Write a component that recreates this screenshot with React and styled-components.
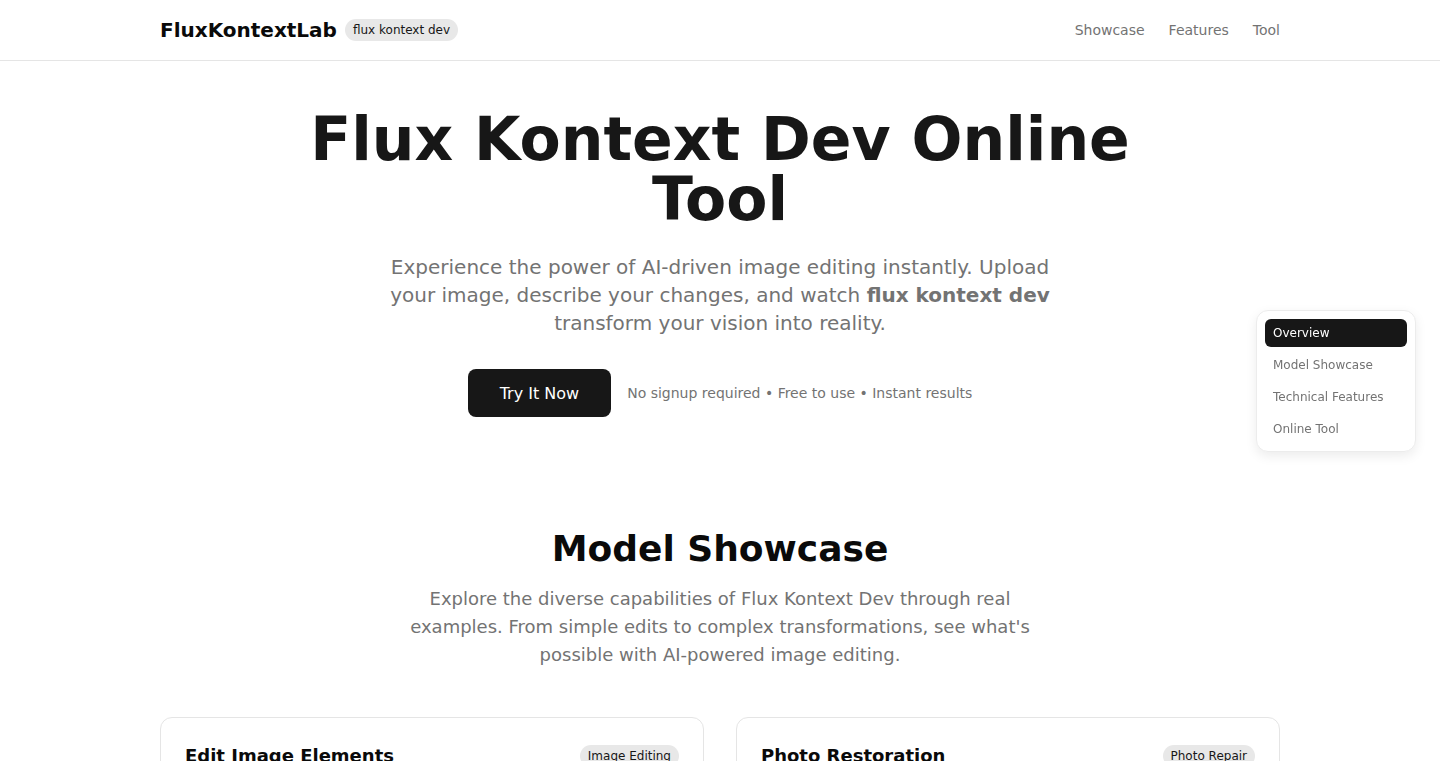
import styled, { createGlobalStyle } from "styled-components";

const GlobalStyle = createGlobalStyle`
  * { box-sizing: border-box; }
  body {
    margin: 0;
    background: #ffffff;
    color: #171717;
    font-family: "DejaVu Sans", sans-serif;
  }
`;

const Header = styled.header`
  height: 61px;
  border-bottom: 1px solid #e5e5e5;
  background: #fff;
`;

const Container = styled.div`
  max-width: 1152px;
  margin: 0 auto;
  padding: 0 16px;
  height: 100%;
`;

const HeaderRow = styled(Container)`
  display: flex;
  align-items: center;
  justify-content: space-between;
`;

const Brand = styled.div`
  display: flex;
  align-items: center;
  gap: 8px;
`;

const Logo = styled.span`
  font-size: 20px;
  font-weight: bold;
  color: #0a0a0a;
`;

const Pill = styled.span`
  font-size: 12px;
  padding: 4px 8px;
  border-radius: 999px;
  background: #e8e8e8;
  color: #171717;
`;

const Nav = styled.nav`
  display: flex;
  gap: 24px;
`;

const NavLink = styled.a`
  font-size: 14px;
  color: #737373;
  text-decoration: none;
`;

const Hero = styled.section`
  padding: 48px 16px 0;
  text-align: center;
`;

const Title = styled.h1`
  margin: 0 auto;
  max-width: 896px;
  font-size: 60px;
  line-height: 60px;
  font-weight: bold;
  color: #171717;
`;

const Lead = styled.p`
  margin: 24px auto 0;
  max-width: 672px;
  font-size: 20px;
  line-height: 28px;
  color: #737373;
  b { font-weight: bold; }
`;

const Actions = styled.div`
  margin-top: 32px;
  display: flex;
  justify-content: center;
  align-items: center;
  gap: 16px;
`;

const Button = styled.button`
  height: 48px;
  padding: 0 32px;
  border: 0;
  border-radius: 8px;
  background: #171717;
  color: #fff;
  font-family: inherit;
  font-size: 16px;
  cursor: pointer;
`;

const Note = styled.span`
  font-size: 14px;
  color: #737373;
`;

const Section = styled.section`
  padding: 112px 16px 0;
  text-align: center;
`;

const H2 = styled.h2`
  margin: 0;
  font-size: 36px;
  line-height: 40px;
  font-weight: bold;
  color: #0a0a0a;
`;

const SubLead = styled.p`
  margin: 16px auto 0;
  max-width: 640px;
  font-size: 18px;
  line-height: 28px;
  color: #737373;
`;

const Grid = styled.div`
  max-width: 1120px;
  margin: 48px auto 0;
  display: grid;
  grid-template-columns: 1fr 1fr;
  gap: 32px;
  text-align: left;
`;

const Card = styled.div`
  border: 1px solid #e5e5e5;
  border-radius: 12px;
  padding: 24px;
  min-height: 200px;
`;

const CardHead = styled.div`
  display: flex;
  justify-content: space-between;
  align-items: center;
  min-height: 28px;
`;

const CardTitle = styled.h3`
  margin: 0;
  font-size: 18px;
  line-height: 28px;
  font-weight: bold;
  color: #0a0a0a;
`;

const Badge = styled.span`
  font-size: 12px;
  padding: 4px 8px;
  border-radius: 999px;
  background: #e8e8e8;
  color: #171717;
`;

const SideNav = styled.aside`
  position: fixed;
  right: 24px;
  top: 310px;
  width: 160px;
  padding: 8px;
  background: #fff;
  border: 1px solid #ececec;
  border-radius: 12px;
  box-shadow: 0 4px 12px rgba(0, 0, 0, 0.08);
  display: flex;
  flex-direction: column;
  gap: 4px;
`;

const SideItem = styled.a`
  display: block;
  height: 28px;
  line-height: 28px;
  padding: 0 8px;
  border-radius: 6px;
  font-size: 12px;
  text-decoration: none;
  color: ${(p) => (p.$active ? "#fff" : "#737373")};
  background: ${(p) => (p.$active ? "#171717" : "transparent")};
`;

export default function App() {
  return (
    <>
      <GlobalStyle />
      <Header>
        <HeaderRow>
          <Brand>
            <Logo>FluxKontextLab</Logo>
            <Pill>flux kontext dev</Pill>
          </Brand>
          <Nav>
            <NavLink href="#showcase">Showcase</NavLink>
            <NavLink href="#features">Features</NavLink>
            <NavLink href="#tool">Tool</NavLink>
          </Nav>
        </HeaderRow>
      </Header>

      <Hero>
        <Title>Flux Kontext Dev Online Tool</Title>
        <Lead>
          Experience the power of AI-driven image editing instantly. Upload
          your image, describe your changes, and watch <b>flux kontext dev</b>{" "}
          transform your vision into reality.
        </Lead>
        <Actions>
          <Button>Try It Now</Button>
          <Note>No signup required • Free to use • Instant results</Note>
        </Actions>
      </Hero>

      <Section id="showcase">
        <H2>Model Showcase</H2>
        <SubLead>
          Explore the diverse capabilities of Flux Kontext Dev through real
          examples. From simple edits to complex transformations, see what's
          possible with AI-powered image editing.
        </SubLead>
        <Grid>
          <Card>
            <CardHead>
              <CardTitle>Edit Image Elements</CardTitle>
              <Badge>Image Editing</Badge>
            </CardHead>
          </Card>
          <Card>
            <CardHead>
              <CardTitle>Photo Restoration</CardTitle>
              <Badge>Photo Repair</Badge>
            </CardHead>
          </Card>
        </Grid>
      </Section>

      <SideNav>
        <SideItem $active href="#overview">Overview</SideItem>
        <SideItem href="#showcase">Model Showcase</SideItem>
        <SideItem href="#features">Technical Features</SideItem>
        <SideItem href="#tool">Online Tool</SideItem>
      </SideNav>
    </>
  );
}
